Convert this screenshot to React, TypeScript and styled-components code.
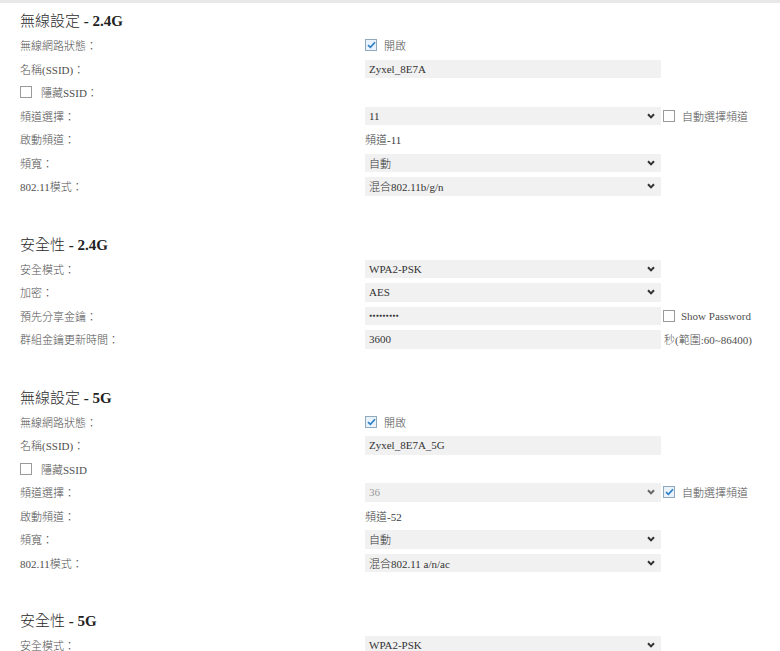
import React from "react";
import styled, { createGlobalStyle } from "styled-components";

const GlobalStyle = createGlobalStyle`
  html, body { margin: 0; padding: 0; background: #ffffff; }
  body {
    font-family: "Liberation Serif", "Noto Sans CJK TC", serif;
    color: #444;
  }
  * { box-sizing: border-box; }
`;

const TopBar = styled.div`
  height: 3px;
  background: #e8e8e8;
`;

const Page = styled.div`
  padding: 7px 0 0 20px;
`;

const Section = styled.section`
  margin-bottom: 35.5px;
`;

const Heading = styled.h3`
  margin: 0;
  height: 23.5px;
  line-height: 23.5px;
  font-size: 15px;
  font-weight: 300;
  color: #2a2a2a;
`;

const HeadingSuffix = styled.span`
  font-weight: bold;
  color: #222;
`;

const Row = styled.div`
  display: grid;
  grid-template-columns: 345px 296px auto;
  align-items: center;
  height: 23.5px;
`;

const Label = styled.span`
  font-size: 11px;
  font-weight: 300;
  color: #505050;
  white-space: nowrap;
`;

const Value = styled.span`
  font-size: 11px;
  font-weight: 300;
  color: #3a3a3a;
  white-space: nowrap;
`;

const Field = styled.div<{ $disabled?: boolean }>`
  height: 18.5px;
  background: #f1f1f1;
  display: flex;
  align-items: center;
  justify-content: space-between;
  padding: 0 6px 0 4px;
  font-size: 11px;
  font-weight: 300;
  color: ${(p) => (p.$disabled ? "#9a9a9a" : "#333")};
  white-space: nowrap;
`;

const Dots = styled.span`
  font-size: 5px;
  letter-spacing: 0.3px;
  color: #333;
`;

const Chevron = styled.svg<{ $muted?: boolean }>`
  width: 8px;
  height: 6px;
  flex: none;
  color: ${(p) => (p.$muted ? "#666" : "#333")};
`;

const CheckRow = styled.label<{ $gap?: number }>`
  display: flex;
  align-items: center;
  gap: ${(p) => p.$gap ?? 8}px;
  font-size: 11px;
  font-weight: 300;
  color: #505050;
  white-space: nowrap;
`;

const Box = styled.span<{ $checked?: boolean }>`
  width: 12px;
  height: 12px;
  border: 1px solid ${(p) => (p.$checked ? "#8fa9bf" : "#9a9a9a")};
  background: ${(p) => (p.$checked ? "#eaf3fb" : "#fff")};
  display: inline-flex;
  align-items: center;
  justify-content: center;
  flex: none;
`;

const Side = styled.div`
  padding-left: 2px;
`;

const SideNote = styled.span`
  font-size: 11px;
  font-weight: 300;
  color: #505050;
  white-space: nowrap;
  padding-left: 1px;
`;

const CheckBox = ({ checked }: { checked?: boolean }) => (
  <Box $checked={checked}>
    {checked && (
      <svg width="9" height="8" viewBox="0 0 9 8">
        <path d="M1 4.2 L3.4 6.4 L8 1.2" fill="none" stroke="#2f80c9" strokeWidth="1.7" />
      </svg>
    )}
  </Box>
);

const ChevronIcon = ({ muted }: { muted?: boolean }) => (
  <Chevron $muted={muted} viewBox="0 0 8 6">
    <path d="M1 1.2 L4 4.4 L7 1.2" fill="none" stroke="currentColor" strokeWidth="2" />
  </Chevron>
);

const SelectField = ({ children, disabled }: { children: React.ReactNode; disabled?: boolean }) => (
  <Field $disabled={disabled}>
    <span>{children}</span>
    <ChevronIcon muted={disabled} />
  </Field>
);

type WirelessProps = {
  band: string;
  ssid: string;
  hideColon: boolean;
  channel: string;
  channelDisabled: boolean;
  autoChannel: boolean;
  active: string;
  mode: string;
};

const WirelessSection = (p: WirelessProps) => (
  <Section>
    <Heading>
      無線設定 <HeadingSuffix>- {p.band}</HeadingSuffix>
    </Heading>
    <Row>
      <Label>無線網路狀態：</Label>
      <CheckRow $gap={7}>
        <CheckBox checked />
        開啟
      </CheckRow>
    </Row>
    <Row>
      <Label>名稱(SSID)：</Label>
      <Field>{p.ssid}</Field>
    </Row>
    <Row>
      <CheckRow $gap={9}>
        <CheckBox />
        {p.hideColon ? "隱藏SSID：" : "隱藏SSID"}
      </CheckRow>
    </Row>
    <Row>
      <Label>頻道選擇：</Label>
      <SelectField disabled={p.channelDisabled}>{p.channel}</SelectField>
      <Side>
        <CheckRow $gap={7}>
          <CheckBox checked={p.autoChannel} />
          自動選擇頻道
        </CheckRow>
      </Side>
    </Row>
    <Row>
      <Label>啟動頻道：</Label>
      <Value>{p.active}</Value>
    </Row>
    <Row>
      <Label>頻寬：</Label>
      <SelectField>自動</SelectField>
    </Row>
    <Row>
      <Label>802.11模式：</Label>
      <SelectField>{p.mode}</SelectField>
    </Row>
  </Section>
);

export default function App() {
  return (
    <>
      <GlobalStyle />
      <TopBar />
      <Page>
        <WirelessSection
          band="2.4G"
          ssid="Zyxel_8E7A"
          hideColon
          channel="11"
          channelDisabled={false}
          autoChannel={false}
          active="頻道-11"
          mode="混合802.11b/g/n"
        />
        <Section>
          <Heading>
            安全性 <HeadingSuffix>- 2.4G</HeadingSuffix>
          </Heading>
          <Row>
            <Label>安全模式：</Label>
            <SelectField>WPA2-PSK</SelectField>
          </Row>
          <Row>
            <Label>加密：</Label>
            <SelectField>AES</SelectField>
          </Row>
          <Row>
            <Label>預先分享金鑰：</Label>
            <Field>
              <Dots>●●●●●●●●●</Dots>
            </Field>
            <Side>
              <CheckRow $gap={6}>
                <CheckBox />
                Show Password
              </CheckRow>
            </Side>
          </Row>
          <Row>
            <Label>群組金鑰更新時間：</Label>
            <Field>3600</Field>
            <Side>
              <SideNote>秒(範圍:60~86400)</SideNote>
            </Side>
          </Row>
        </Section>
        <WirelessSection
          band="5G"
          ssid="Zyxel_8E7A_5G"
          hideColon={false}
          channel="36"
          channelDisabled
          autoChannel
          active="頻道-52"
          mode="混合802.11 a/n/ac"
        />
        <Section>
          <Heading>
            安全性 <HeadingSuffix>- 5G</HeadingSuffix>
          </Heading>
          <Row>
            <Label>安全模式：</Label>
            <SelectField>WPA2-PSK</SelectField>
          </Row>
        </Section>
      </Page>
    </>
  );
}
